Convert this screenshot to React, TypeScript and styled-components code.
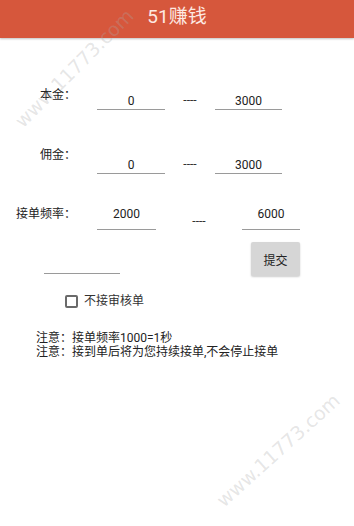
import styled, { createGlobalStyle } from "styled-components";

const GlobalStyle = createGlobalStyle`
  html, body {
    margin: 0;
    padding: 0;
    background: #ffffff;
  }
  body {
    font-family: Roboto, "Noto Sans CJK SC", sans-serif;
    color: #222222;
  }
`;

const Page = styled.div`
  position: relative;
  width: 354px;
  height: 526px;
  overflow: hidden;
  background: #ffffff;
`;

const Header = styled.header`
  height: 38px;
  line-height: 33px;
  background: #d6573c;
  color: #fde9e2;
  font-size: 19px;
  text-align: center;
  box-shadow: 0 1px 2px rgba(0, 0, 0, 0.25);
`;

const Form = styled.div`
  display: flex;
  flex-direction: column;
`;

const Row = styled.div<{ $top: number; $cols: string }>`
  display: grid;
  grid-template-columns: ${({ $cols }) => $cols};
  align-items: start;
  margin-top: ${({ $top }) => $top}px;
`;

const Label = styled.div`
  font-size: 12px;
  line-height: 14px;
  text-align: right;
  padding-right: 4px;
  white-space: nowrap;
`;

const Field = styled.div<{ $top?: number; $pad?: number }>`
  margin-top: ${({ $top = 0 }) => $top}px;
  padding-bottom: ${({ $pad = 1 }) => $pad}px;
  border-bottom: 1px solid #9a9a9a;
  font-size: 12px;
  line-height: 14px;
  min-height: 14px;
  text-align: center;
  color: #222222;
`;

const Dash = styled.div<{ $top: number }>`
  margin-top: ${({ $top }) => $top}px;
  font-size: 12px;
  line-height: 14px;
  text-align: center;
  color: #333333;
`;

const ActionRow = styled.div`
  display: flex;
  align-items: flex-start;
  margin-top: 12px;
  padding: 0 54px 0 44px;
`;

const LoneField = styled(Field)`
  width: 76px;
  margin-top: 16px;
`;

const SubmitButton = styled.button`
  margin-left: auto;
  width: 49px;
  height: 34px;
  border: none;
  border-radius: 2px;
  background: #d6d6d6;
  box-shadow: 0 1px 2px rgba(0, 0, 0, 0.2);
  font-family: inherit;
  font-size: 12px;
  color: #222222;
  padding: 0;
`;

const CheckRow = styled.label`
  display: flex;
  align-items: center;
  gap: 6px;
  margin: 18px 0 0 65px;
  font-size: 12px;
  line-height: 14px;
  color: #333333;
`;

const Box = styled.span`
  box-sizing: border-box;
  width: 13px;
  height: 13px;
  border: 2px solid #6a6a6a;
  border-radius: 2px;
`;

const Notes = styled.div`
  margin: 23px 0 0 36px;
  font-size: 12px;
  line-height: 14px;
  color: #222222;
`;

const Watermark = styled.div<{ $x: number; $y: number; $angle: number }>`
  position: absolute;
  left: ${({ $x }) => $x}px;
  top: ${({ $y }) => $y}px;
  transform: translate(-50%, -50%) rotate(${({ $angle }) => $angle}deg);
  font-family: "DejaVu Sans", sans-serif;
  font-size: 19px;
  white-space: nowrap;
  color: rgba(170, 170, 170, 0.3);
  pointer-events: none;
`;

export default function App() {
  return (
    <Page>
      <GlobalStyle />
      <Header>51赚钱</Header>
      <Form>
        <Row $top={50} $cols="80px 17px 68px 50px 67px">
          <Label>本金：</Label>
          <span />
          <Field $top={6}>0</Field>
          <Dash $top={5}>----</Dash>
          <Field $top={6}>3000</Field>
        </Row>
        <Row $top={38} $cols="80px 17px 68px 50px 67px">
          <Label>佣金：</Label>
          <span />
          <Field $top={10}>0</Field>
          <Dash $top={9}>----</Dash>
          <Field $top={10}>3000</Field>
        </Row>
        <Row $top={33} $cols="80px 17px 59px 86px 58px">
          <Label>接单频率：</Label>
          <span />
          <Field $pad={8}>2000</Field>
          <Dash $top={7}>----</Dash>
          <Field $pad={8}>6000</Field>
        </Row>
        <ActionRow>
          <LoneField />
          <SubmitButton>提交</SubmitButton>
        </ActionRow>
        <CheckRow>
          <Box />
          不接审核单
        </CheckRow>
        <Notes>
          <div>注意：接单频率1000=1秒</div>
          <div>注意：接到单后将为您持续接单,不会停止接单</div>
        </Notes>
      </Form>
      <Watermark $x={74} $y={68} $angle={-45}>
        www.11773.com
      </Watermark>
      <Watermark $x={278} $y={450} $angle={-42}>
        www.11773.com
      </Watermark>
    </Page>
  );
}
